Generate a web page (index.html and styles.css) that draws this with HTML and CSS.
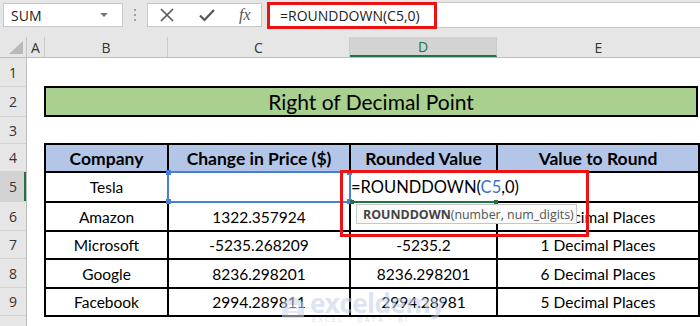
FILE: index.html
```html
<!DOCTYPE html>
<html lang="en">
<head>
    <meta charset="UTF-8">
    <title>ROUNDDOWN - Right of Decimal Point</title>
    <link rel="stylesheet" href="styles.css">
</head>
<body>
<div class="app">
    <div class="topbar">
        <div class="namebox"><span>SUM</span><span class="caret"></span></div>
        <div class="grip"><i></i><i></i><i></i></div>
        <div class="fxbox">
            <svg class="ico" width="16" height="16" viewBox="0 0 16 16"><path d="M2 2 L14 14 M14 2 L2 14" stroke="#555" stroke-width="1.6" fill="none"/></svg>
            <svg class="ico" width="18" height="16" viewBox="0 0 18 16"><path d="M2 8.5 L6.5 13 L16 3" stroke="#555" stroke-width="2.2" fill="none"/></svg>
            <span class="fx">fx</span>
        </div>
        <div class="formula">
            <span class="formula-text">=ROUNDDOWN(C5,0)</span>
            <div class="mark mark-bar"></div>
        </div>
    </div>

    <div class="colheads">
        <div class="corner"><svg width="14" height="13" viewBox="0 0 14 13"><polygon points="14,0 14,13 0,13" fill="#b9b9b9"/></svg></div>
        <div class="colhead col-a">A</div>
        <div class="colhead col-b">B</div>
        <div class="colhead col-c">C</div>
        <div class="colhead col-d active">D</div>
        <div class="colhead col-e">E</div>
    </div>

    <div class="body">
        <div class="rowheads">
            <div class="rowhead h1">1</div>
            <div class="rowhead h2">2</div>
            <div class="rowhead h3">3</div>
            <div class="rowhead h4">4</div>
            <div class="rowhead h5 active">5</div>
            <div class="rowhead h6">6</div>
            <div class="rowhead h7">7</div>
            <div class="rowhead h8">8</div>
            <div class="rowhead h9">9</div>
            <div class="rowhead h10"></div>
        </div>

        <div class="sheet">
            <div class="h1"></div>
            <div class="h2 title-row"><div class="title">Right of Decimal Point</div></div>
            <div class="h3"></div>

            <table class="data">
                <colgroup>
                    <col class="w-b"><col class="w-c"><col class="w-d"><col class="w-e">
                </colgroup>
                <tr class="h4">
                    <th>Company</th>
                    <th>Change in Price ($)</th>
                    <th>Rounded Value</th>
                    <th>Value to Round</th>
                </tr>
                <tr class="h5">
                    <td>Tesla</td>
                    <td></td>
                    <td class="editing">=ROUNDDOWN(<span class="ref">C5</span>,0)</td>
                    <td class="after-edit"></td>
                </tr>
                <tr class="h6">
                    <td>Amazon</td>
                    <td>1322.357924</td>
                    <td>1322.35</td>
                    <td>2 Decimal Places</td>
                </tr>
                <tr class="h7">
                    <td>Microsoft</td>
                    <td>-5235.268209</td>
                    <td>-5235.2</td>
                    <td>1 Decimal Places</td>
                </tr>
                <tr class="h8">
                    <td>Google</td>
                    <td>8236.298201</td>
                    <td>8236.298201</td>
                    <td>6 Decimal Places</td>
                </tr>
                <tr class="h9">
                    <td>Facebook</td>
                    <td>2994.289811</td>
                    <td>2994.28981</td>
                    <td>5 Decimal Places</td>
                </tr>
            </table>

            <!-- overlays -->
            <div class="ref-box"><i class="dot tl"></i><i class="dot tr"></i><i class="dot bl"></i><i class="dot br"></i></div>
            <div class="active-line"><i class="dot bl"></i><i class="dot br"></i></div>
            <div class="tooltip"><b>ROUNDDOWN</b>(number, num_digits)</div>
            <div class="mark mark-cell"></div>
            <div class="watermark">
                <svg width="26" height="26" viewBox="0 0 26 26"><path d="M13 2 L24 9 L24 24 L2 24 L2 9 Z" fill="#cdd6ea"/><path d="M8 12 L18 12 M8 16 L18 16 M8 20 L18 20" stroke="#fff" stroke-width="2"/></svg>
                <div class="wm-text">
                    <span class="wm-name">exceldemy</span>
                    <span class="wm-sub">EXCEL · DATA · BI</span>
                </div>
            </div>
        </div>
    </div>
</div>
</body>
</html>
```

FILE: styles.css
```css
* { box-sizing: border-box; }
body { margin: 0; background: #fff; font-family: "Open Sans", "Noto Sans", sans-serif; }
.app { width: 700px; height: 326px; overflow: hidden; }

/* formula bar */
.topbar { height: 37px; background: #e6e6e6; display: flex; align-items: flex-start; padding: 3px 0 0 3px; }
.namebox { width: 120px; height: 24px; background: #fff; border: 1px solid #c8c8c8; display: flex; align-items: center; justify-content: space-between; padding: 0 14px 0 7px; font-size: 14px; color: #222; }
.caret { border-left: 4px solid transparent; border-right: 4px solid transparent; border-top: 4px solid #777; }
.grip { width: 24px; height: 24px; display: flex; flex-direction: column; align-items: center; justify-content: center; gap: 3px; }
.grip i { width: 2px; height: 2px; background: #a0a0a0; }
.fxbox { width: 115px; height: 24px; background: #fff; border: 1px solid #c8c8c8; display: flex; align-items: center; padding-left: 11px; gap: 23px; }
.fx { font-family: "Liberation Serif", serif; font-style: italic; font-size: 16px; color: #555; }
.formula { margin-left: 5px; margin-top: -1px; flex: 1; height: 26px; background: #fff; border: 1px solid #c8c8c8; border-right: none; position: relative; display: flex; align-items: center; padding-left: 12px; font-size: 14px; color: #222; }

.mark { position: absolute; border: 3px solid #ee1111; }
.mark-bar { left: -1px; top: -1px; width: 170px; height: 27px; }

/* column headers */
.colheads { height: 21px; display: flex; background: #e6e6e6; border-bottom: 1px solid #bdbdbd; }
.corner { width: 27px; display: flex; justify-content: flex-end; align-items: flex-end; padding: 0 3px 3px 0; border-right: 1px solid #c4c4c4; }
.colhead { display: flex; align-items: center; justify-content: center; font-size: 14px; color: #333; border-right: 1px solid #cbcbcb; }
.col-a { width: 18px; }
.col-b { width: 123px; }
.col-c { width: 182px; }
.col-d { width: 147px; }
.col-e { flex: 1; border-right: none; }
.colhead.active { background: #d3d3d3; color: #217346; border-bottom: 2px solid #217346; }

/* rows */
.body { display: flex; }
.rowheads { width: 27px; background: #e6e6e6; border-right: 1px solid #bdbdbd; }
.rowhead { display: flex; align-items: center; justify-content: center; font-size: 14px; color: #333; border-bottom: 1px solid #d2d2d2; }
.rowhead.active { background: #d3d3d3; box-shadow: inset -2px 0 0 #217346; }
.h1 { height: 29px; }
.h2 { height: 30px; }
.h3 { height: 27px; }
.h4 { height: 28px; }
.h5 { height: 30px; }
.h6 { height: 29px; }
.h7 { height: 28px; }
.h8 { height: 29px; }
.h9 { height: 28px; }
.h10 { height: 30px; }

.sheet { flex: 1; position: relative; font-family: Lato, "Liberation Sans", sans-serif; color: #000; }
.title-row { padding-left: 17px; }
.title { width: 654px; height: 31px; margin-top: -1px; background: #a9d08e; border: 2px solid #000; display: flex; align-items: center; justify-content: center; font-size: 21px; }

.data { margin-left: 17px; width: 654px; border-collapse: collapse; table-layout: fixed; font-size: 15.5px; }
.w-b { width: 123px; }
.w-c { width: 182px; }
.w-d { width: 147px; }
.w-e { width: 202px; }
.data th, .data td { border: 2px solid #000; padding: 0; text-align: center; white-space: nowrap; }
.data th { background: #b4c6e7; font-size: 17.5px; font-weight: bold; }
.data td.editing { text-align: left; padding-left: 0; font-size: 16.5px; overflow: visible; border-right: hidden; }
.data td.after-edit { border-left: hidden; border-bottom-width: 1px; }
.ref { color: #3a6fd0; }

/* overlays */
.ref-box { position: absolute; left: 140px; top: 113px; width: 184px; height: 32px; border: 2px solid #4a7fd6; }
.dot { position: absolute; width: 5px; height: 5px; background: #4a7fd6; }
.ref-box .tl { left: -3px; top: -3px; }
.ref-box .tr { right: -3px; top: -3px; }
.ref-box .bl { left: -3px; bottom: -3px; }
.ref-box .br { right: -3px; bottom: -3px; }
.active-line { position: absolute; left: 324px; top: 143px; width: 146px; height: 2px; background: #217346; }
.active-line .dot { background: #217346; width: 4px; height: 4px; }
.active-line .bl { left: -1px; top: -1px; }
.active-line .br { right: -1px; top: -1px; }

.tooltip { position: absolute; left: 329px; top: 146px; width: 221px; height: 20px; background: #fafafa; border: 1px solid #c6c6c6; font-family: "Open Sans", sans-serif; font-size: 12.4px; color: #555; display: flex; align-items: center; padding-left: 6px; white-space: nowrap; }
.tooltip b { color: #444; }

.mark-cell { left: 313px; top: 112px; width: 249px; height: 67px; }

.watermark { position: absolute; left: 253px; top: 232px; display: flex; align-items: center; gap: 4px; opacity: 0.55; }
.wm-text { display: flex; flex-direction: column; line-height: 1; }
.wm-name { font-family: "Open Sans", sans-serif; font-weight: bold; font-size: 26px; color: #c3cee8; letter-spacing: -0.5px; }
.wm-sub { font-family: "Open Sans", sans-serif; font-size: 7px; color: #c0c0c0; letter-spacing: 2.5px; margin-left: 2px; }
```
